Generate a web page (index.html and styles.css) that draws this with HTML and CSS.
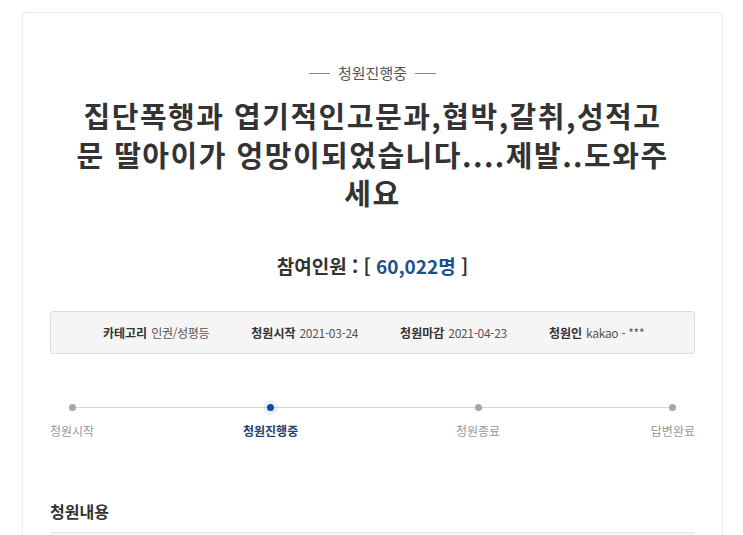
FILE: index.html
```html
<!DOCTYPE html>
<html lang="ko">
<head>
<meta charset="utf-8">
<link rel="stylesheet" href="styles.css">
</head>
<body>
<div class="page">
  <div class="card">
    <div class="status"><span class="dash"></span><span>청원진행중</span><span class="dash"></span></div>
    <h1 class="title">집단폭행과 엽기적인고문과,협박,갈취,성적고문 딸아이가 엉망이되었습니다....제발..도와주세요</h1>
    <div class="count">참여인원 : [ <span class="num">60,022명</span> ]</div>
    <div class="info">
      <div class="item"><b>카테고리</b><span>인권/성평등</span></div>
      <div class="item"><b>청원시작</b><span>2021-03-24</span></div>
      <div class="item"><b>청원마감</b><span>2021-04-23</span></div>
      <div class="item"><b>청원인</b><span>kakao - ***</span></div>
    </div>
    <div class="progress">
      <div class="track"></div>
      <div class="step s1"><i class="dot"></i><span>청원시작</span></div>
      <div class="step s2 active"><i class="dot"></i><span>청원진행중</span></div>
      <div class="step s3"><i class="dot"></i><span>청원종료</span></div>
      <div class="step s4"><i class="dot"></i><span>답변완료</span></div>
    </div>
    <h2 class="section">청원내용</h2>
    <div class="content-box"></div>
  </div>
</div>
</body>
</html>
```
FILE: styles.css
```css
* { box-sizing: border-box; }
html, body { margin: 0; padding: 0; background: #fff; }
body {
  font-family: "Noto Sans CJK KR", "Noto Sans", sans-serif;
  color: #333;
  overflow: hidden;
}
.page { padding: 12px 0 0 22px; }
.card {
  width: 701px;
  border: 1px solid #ececec;
  border-bottom: none;
  border-radius: 3px 3px 0 0;
  padding: 50px 27px 0 27px;
  height: 523px;
  overflow: hidden;
}
.status {
  display: flex;
  justify-content: center;
  align-items: center;
  gap: 8px;
  font-size: 15px;
  color: #555;
  line-height: 20px;
}
.dash { width: 21px; height: 1px; background: #888; }
.title {
  margin: 13px auto 0;
  width: 594px;
  text-align: center;
  font-size: 29px;
  font-weight: 700;
  line-height: 38.5px;
  color: #333;
  letter-spacing: 1.5px;
}
.count {
  margin-top: 41px;
  text-align: center;
  font-size: 19px;
  font-weight: 700;
  color: #333;
  line-height: 26px;
}
.count .num { color: #1e4f8d; }
.info {
  margin-top: 32px;
  height: 43px;
  background: #f5f5f5;
  border: 1px solid #dcdcdc;
  border-radius: 3px;
  display: flex;
  align-items: center;
  padding-left: 52px;
  gap: 42px;
  font-size: 12px;
  color: #555;
}
.item span { letter-spacing: -0.3px; }
.item b { color: #333; font-weight: 700; margin-right: 4px; }
.progress {
  position: relative;
  margin-top: 48px;
  height: 40px;
}
.track {
  position: absolute;
  left: 20px; right: 21px; top: 5px;
  height: 1px; background: #d8d8d8;
}
.step {
  position: absolute;
  top: 0;
  display: flex;
  flex-direction: column;
  align-items: center;
  font-size: 12px;
  color: #999;
}
.step span { margin-top: 12px; line-height: 16px; }
.dot { display: block; width: 7px; height: 7px; border-radius: 50%; background: #a6a6a6; margin-top: 2px; }
.s1 { left: 0; }
.s2 { left: 193px; }
.s3 { left: 406px; }
.s4 { right: 0; }
.active { color: #1e3f6f; font-weight: 700; }
.active .dot { background: #0b4ea2; box-shadow: 0 0 0 4px rgba(11,78,162,0.08); }
.section {
  margin: 58px 0 0;
  font-size: 16px;
  font-weight: 700;
  color: #333;
  line-height: 22px;
}
.content-box {
  margin-top: 10px;
  height: 40px;
  background: #f7f7f7;
  border-top: 1px solid #e6e6e6;
}
```
